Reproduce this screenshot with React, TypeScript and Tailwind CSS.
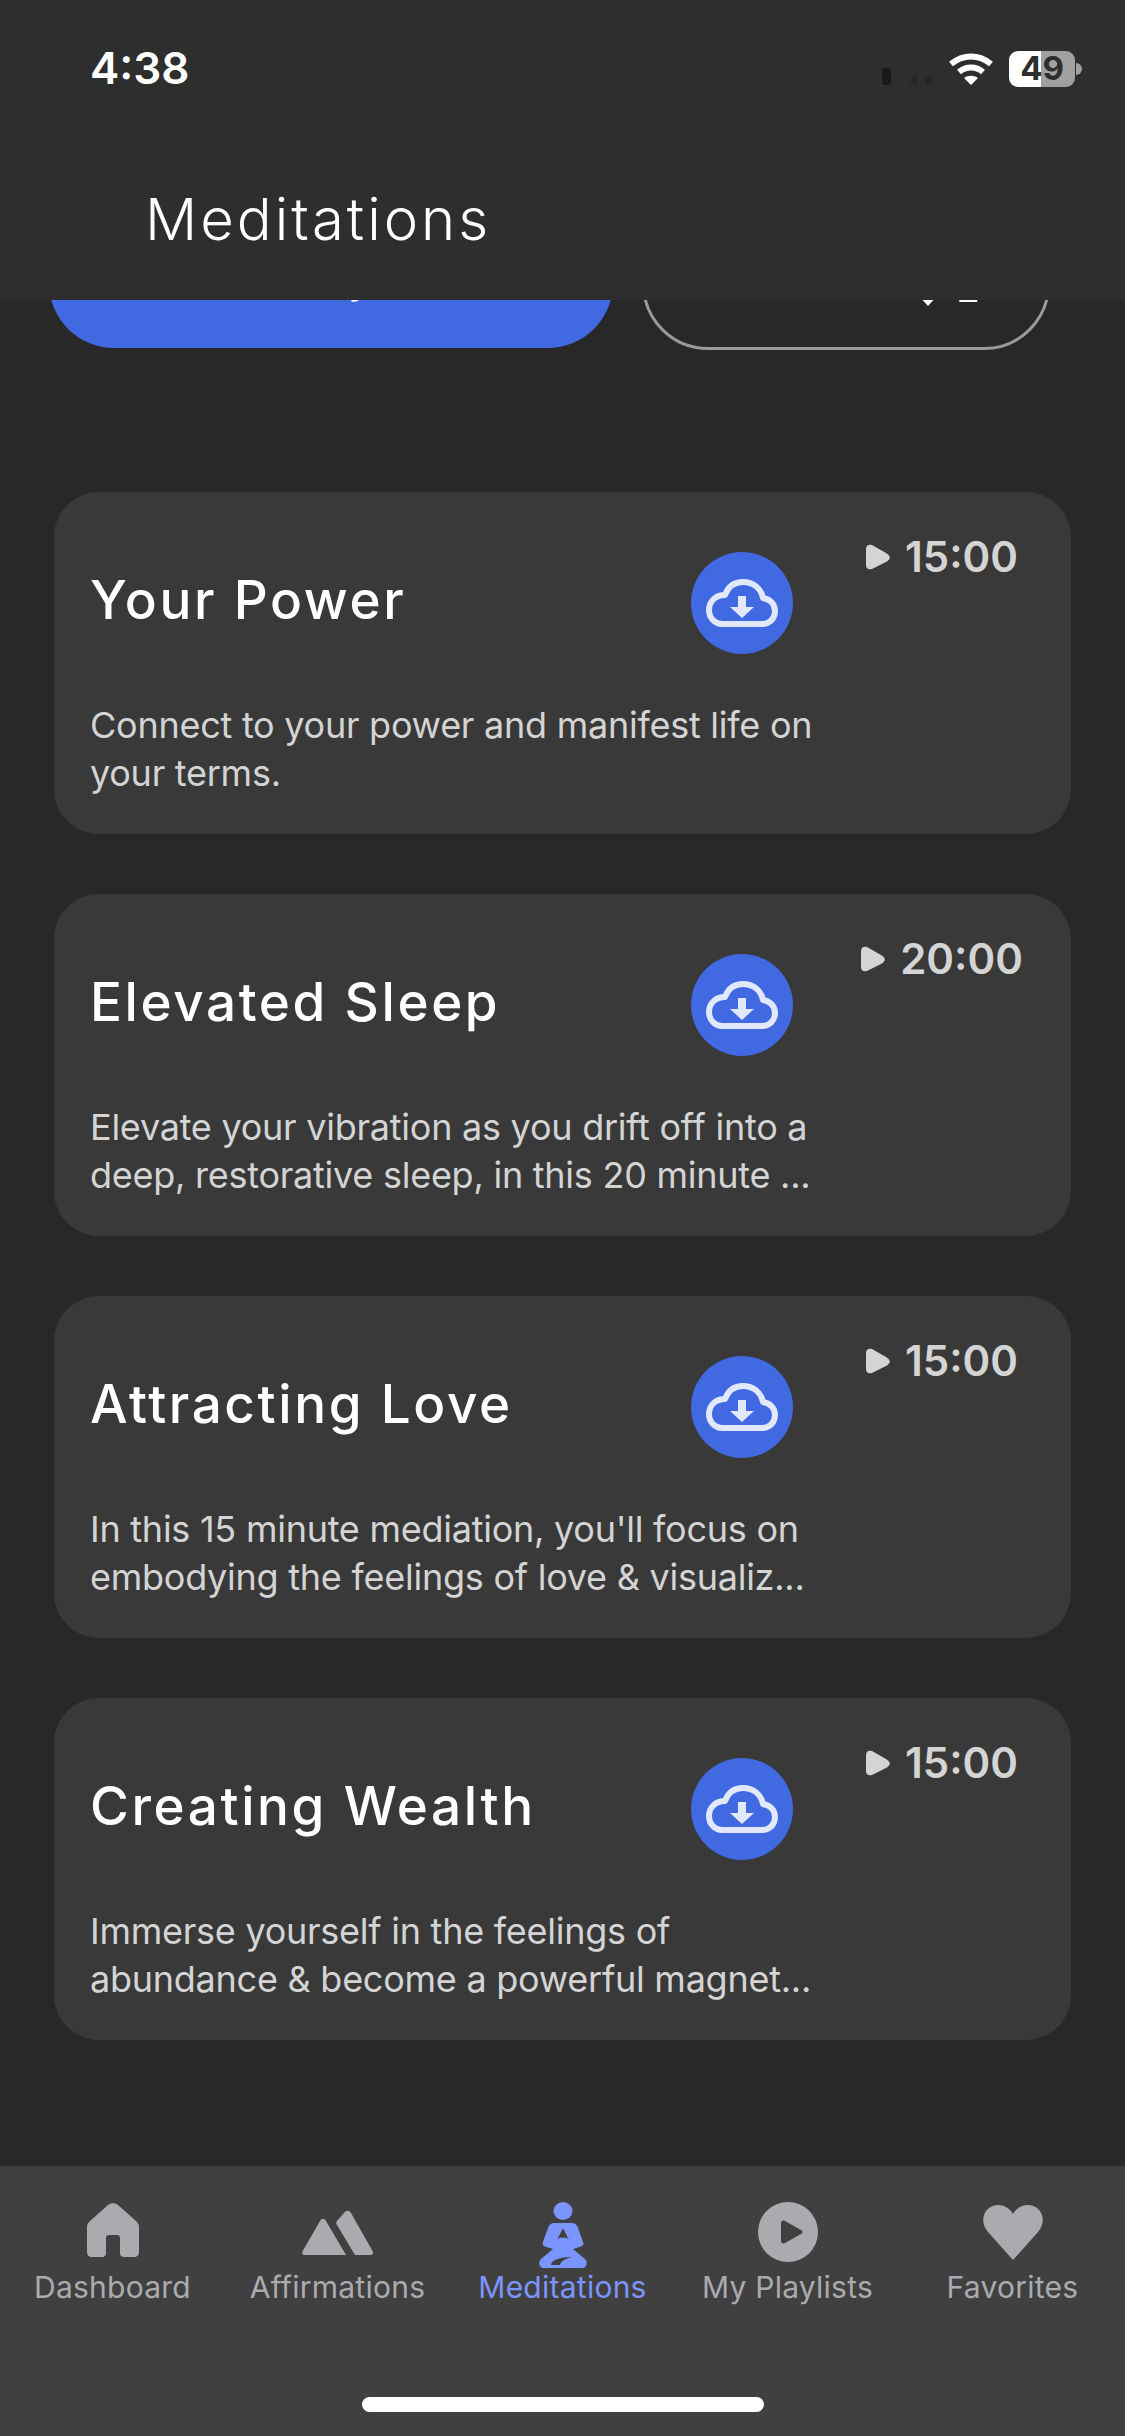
const font = "font-['Inter',sans-serif]";

const meditations = [
  { title: "Your Power", time: "15:00", lines: ["Connect to your power and manifest life on", "your terms."] },
  { title: "Elevated Sleep", time: "20:00", lines: ["Elevate your vibration as you drift off into a", "deep, restorative sleep, in this 20 minute ..."] },
  { title: "Attracting Love", time: "15:00", lines: ["In this 15 minute mediation, you'll focus on", "embodying the feelings of love & visualiz..."] },
  { title: "Creating Wealth", time: "15:00", lines: ["Immerse yourself in the feelings of", "abundance & become a powerful magnet..."] },
];

function CloudDownload() {
  return (
    <svg width="72" height="50" viewBox="0 0 72 50" fill="none">
      <path d="M16 46h40c8 0 13-6 13-13 0-7-5-12-12-13C55 10 47 4 37 4c-9 0-15 5-18 13C9 17 3 24 3 32c0 8 6 14 13 14z" stroke="#e1e8fb" strokeWidth="6" strokeLinejoin="round" />
      <path d="M32 18h8v11h8L36 40 24 29h8z" fill="#e1e8fb" />
    </svg>
  );
}

function PlayMark() {
  return (
    <svg width="24" height="26" viewBox="0 0 24 26">
      <path d="M0 5c0-4 3-5 6-4l14 8c5 3 5 6 0 9L6 25c-3 1-6 0-6-4z" fill="#d4d4d4" />
    </svg>
  );
}

function MeditationCard({ title, time, lines }: { title: string; time: string; lines: string[] }) {
  return (
    <div className="h-[342px] rounded-[45px] bg-[#393939] pl-[36px]">
      <div className="flex items-start pt-[60px]">
        <h3 className="w-[601px] pt-[13px] text-[53px] leading-[70px] font-medium tracking-[2.6px] text-white">{title}</h3>
        <div className="flex h-[102px] w-[102px] items-center justify-center rounded-full bg-[#4169e1]">
          <CloudDownload />
        </div>
        <div className="-mt-[20px] ml-[20px] flex w-[258px] items-center justify-center gap-[15px]">
          <PlayMark />
          <span className="text-[42px] leading-[50px] font-semibold text-[#d4d4d4]">{time}</span>
        </div>
      </div>
      <p className="mt-[47px] text-[36px] leading-[48px] tracking-[-0.25px] text-[#d4d4d4]">
        {lines.map((line) => (
          <span key={line} className="block whitespace-nowrap">{line}</span>
        ))}
      </p>
    </div>
  );
}

function HomeIcon() {
  return (
    <svg width="52" height="55" viewBox="0 0 52 55" fill="#ababaf">
      <path d="M21 2c3-2.5 7-2.5 10 0l18 16c2 2 3 3.5 3 6v25c0 3-2 5-5 5h-10c-3 0-4-2-4-4V35c0-2-1-3-3-3h-8c-2 0-3 1-3 3v15c0 2-1 4-4 4H5c-3 0-5-2-5-5V24c0-2.5 1-4 3-6z" />
    </svg>
  );
}

function MountainIcon() {
  return (
    <svg width="72" height="46" viewBox="0 0 72 46" fill="#ababaf">
      <path d="M18 11c1.5-3 4.5-3 6 0l20 34H3c-3 0-3.500-2-2-4.500z" />
      <path d="M42 3c2-3 5-3 7 0l21 37c2 3 1 5-2 5H53L35 15c-1-1.500-1-2.500 0-4z" />
    </svg>
  );
}

function MeditationIcon() {
  return (
    <svg width="48" height="66" viewBox="0 0 48 66" fill="#7b95ff">
      <ellipse cx="24" cy="9" rx="9.500" ry="9" />
      <path d="M15 21h18c3 0 5 2 6 5l5 14c1 2 0 4-2 4.500L34 47l12 10c3 3 2 9-3 9H5c-5 0-6-6-3-9l12-10-8-2.500c-2-.5-3-2.500-2-4.500l5-14c1-3 3-5 6-5z" />
      <path d="M24 26l-6 12c2-2.500 4-3 6-2 2-1 4-.5 6 2z" fill="#404040" />
      <path d="M12 63c0-5 9-8 21-8-7 2-11 4-12 8z" fill="#404040" />
    </svg>
  );
}

function PlayCircleIcon() {
  return (
    <svg width="60" height="60" viewBox="0 0 60 60">
      <circle cx="30" cy="30" r="30" fill="#ababaf" />
      <path d="M23 21c0-2 2-3 4-2l16 9c2 1 2 3 0 4l-16 9c-2 1-4 0-4-2z" fill="#404040" />
    </svg>
  );
}

function HeartIcon() {
  return (
    <svg width="60" height="56" viewBox="0 0 60 56" fill="#ababaf">
      <path d="M30 56L5 28C-2 20-1 9 6 4c7-5 18-4 24 6C36 0 47-1 54 4c7 5 8 16 1 24z" />
    </svg>
  );
}

const tabs = [
  { label: "Dashboard", icon: <HomeIcon />, offset: "pt-[1px]", active: false },
  { label: "Affirmations", icon: <MountainIcon />, offset: "pt-[8px]", active: false },
  { label: "Meditations", icon: <MeditationIcon />, offset: "pt-0", active: true },
  { label: "My Playlists", icon: <PlayCircleIcon />, offset: "pt-0", active: false },
  { label: "Favorites", icon: <HeartIcon />, offset: "pt-[2px]", active: false },
];

function WifiIcon() {
  return (
    <svg width="46" height="34" viewBox="0 0 46 34" fill="none" stroke="#fff" strokeWidth="6">
      <path d="M3 12c12-10 28-10 40 0" />
      <path d="M11 20c7-6 17-6 24 0" />
      <path d="M23 33l-7-7c4-3 10-3 14 0z" fill="#fff" stroke="none" />
    </svg>
  );
}

export default function App() {
  return (
    <div className={`flex h-[2436px] w-[1125px] flex-col overflow-hidden bg-[#282828] ${font}`}>
      <header className="relative z-10 h-[300px] shrink-0 bg-[#2e2e2e]">
        <div className="flex items-center justify-between pt-[42px] pr-[43px] pl-[90px]">
          <span className="text-[44px] leading-[53px] font-semibold text-white">4:38</span>
          <div className="flex items-center">
            <span className="mt-[15px] h-[17px] w-[9px] rounded-[3px] bg-[#1a1a1a]" />
            <span className="mt-[23px] ml-[20px] h-[9px] w-[7px] rounded-[2px] bg-[#262626]" />
            <span className="mt-[23px] ml-[7px] h-[9px] w-[8px] rounded-[2px] bg-[#262626]" />
            <span className="ml-[15px]"><WifiIcon /></span>
            <div className="ml-[15px] flex h-[36px] w-[66px] items-center justify-center rounded-[9px] bg-[linear-gradient(90deg,#fff_48%,#a0a0a0_48%)]">
              <span className="text-[33px] leading-none font-bold text-[#2e2e2e]">49</span>
            </div>
            <span className="ml-[1px] h-[12px] w-[6px] rounded-r-full bg-[#a0a0a0]" />
          </div>
        </div>
        <h1 className="mt-[92px] ml-[145px] text-[58px] leading-[64px] font-light tracking-[3px] text-white">Meditations</h1>
      </header>

      <main className="min-h-0 flex-1 overflow-hidden">
        <div className="-mt-[82px] flex items-start pl-[49px]">
          <div className="flex h-[130px] w-[564px] items-center justify-center rounded-[65px] bg-[#4169e1] pb-[9px] text-[40px] leading-[50px] font-medium text-white">Play</div>
          <div className="ml-[29px] flex h-[132px] w-[408px] items-center justify-end gap-[18px] rounded-[66px] border-[3px] border-[#9a9a9a] pt-[12px] pr-[68px] text-[34px] leading-[50px] font-medium text-white">
            <svg width="22" height="26" viewBox="0 0 22 26" className="mt-[6px]" fill="#fff">
              <path d="M7 0h8v14h7L11 26 0 14h7z" />
            </svg>
            <span>Z</span>
          </div>
        </div>
        <div className="mt-[142px] flex flex-col gap-[60px] px-[54px]">
          {meditations.map((item) => (
            <MeditationCard key={item.title} {...item} />
          ))}
        </div>
      </main>

      <nav className="h-[270px] shrink-0 bg-[#404040]">
        <div className="grid grid-cols-5 pt-[36px]">
          {tabs.map((tab) => (
            <div key={tab.label} className="flex flex-col items-center">
              <div className={`flex h-[66px] items-start justify-center ${tab.offset}`}>{tab.icon}</div>
              <span className={`mt-[1px] text-[30px] leading-[36px] tracking-[0.25px] ${tab.active ? "text-[#7b95ff]" : "text-[#ababaf]"}`}>{tab.label}</span>
            </div>
          ))}
        </div>
        <div className="mx-auto mt-[92px] h-[15px] w-[402px] rounded-full bg-white" />
      </nav>
    </div>
  );
}
